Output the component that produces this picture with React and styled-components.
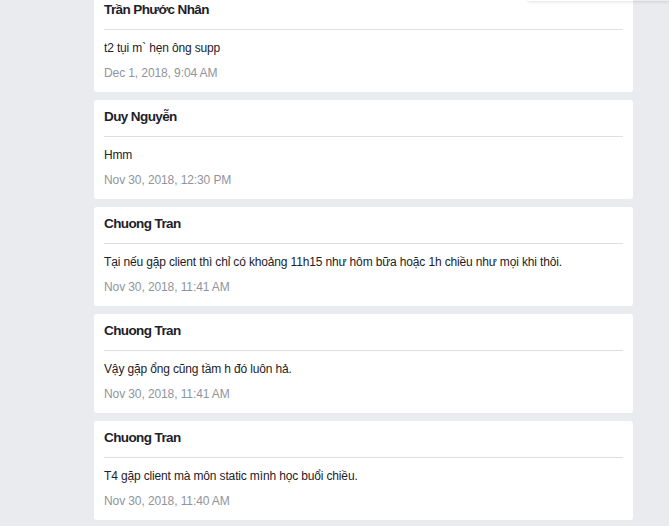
import React from "react";
import styled, { createGlobalStyle } from "styled-components";

const Global = createGlobalStyle`
  html, body { margin: 0; padding: 0; background: #e9ebee; overflow: hidden; }
  body { font-family: "Liberation Sans", Arial, Helvetica, sans-serif; }
`;

const Page = styled.div`
  position: relative;
  width: 669px;
  height: 526px;
  overflow: hidden;
  background: #e9ebee;
`;

const List = styled.div`
  display: flex;
  flex-direction: column;
  gap: 8px;
  width: 539px;
  margin: -7px 0 0 94px;
`;

const Card = styled.div`
  background: #fff;
  border-radius: 3px;
  padding: 0 10px;
  height: 99px;
  box-sizing: border-box;
  display: flex;
  flex-direction: column;
`;

const Header = styled.div`
  padding: 8px 0 10px;
  border-bottom: 1px solid #dddfe2;
`;

const Name = styled.div`
  font-size: 13.5px;
  line-height: 18px;
  font-weight: bold;
  color: #1d2129;
  letter-spacing: -0.6px;
`;

const Message = styled.div`
  margin-top: 10px;
  font-size: 12px;
  line-height: 16px;
  color: #1d2129;
  white-space: nowrap;
  letter-spacing: -0.15px;
`;

const Time = styled.div`
  margin-top: 9px;
  font-size: 12px;
  line-height: 16px;
  color: #90949c;
  letter-spacing: -0.1px;
`;

const TopShadow = styled.div`
  position: absolute;
  left: 528px;
  right: 0;
  top: -10px;
  height: 11px;
  box-shadow: 0 1px 3px rgba(0, 0, 0, 0.12);
`;

const items = [
  { name: "Trần Phước Nhân", text: "t2 tụi m` hẹn ông supp", time: "Dec 1, 2018, 9:04 AM" },
  { name: "Duy Nguyễn", text: "Hmm", time: "Nov 30, 2018, 12:30 PM" },
  {
    name: "Chuong Tran",
    text: "Tại nếu gặp client thì chỉ có khoảng 11h15 như hôm bữa hoặc 1h chiều như mọi khi thôi.",
    time: "Nov 30, 2018, 11:41 AM",
  },
  { name: "Chuong Tran", text: "Vậy gặp ổng cũng tầm h đó luôn hả.", time: "Nov 30, 2018, 11:41 AM" },
  { name: "Chuong Tran", text: "T4 gặp client mà môn static mình học buổi chiều.", time: "Nov 30, 2018, 11:40 AM" },
];

export default function App() {
  return (
    <Page>
      <Global />
      <List>
        {items.map((it, i) => (
          <Card key={i}>
            <Header>
              <Name>{it.name}</Name>
            </Header>
            <Message>{it.text}</Message>
            <Time>{it.time}</Time>
          </Card>
        ))}
      </List>
      <TopShadow />
    </Page>
  );
}
